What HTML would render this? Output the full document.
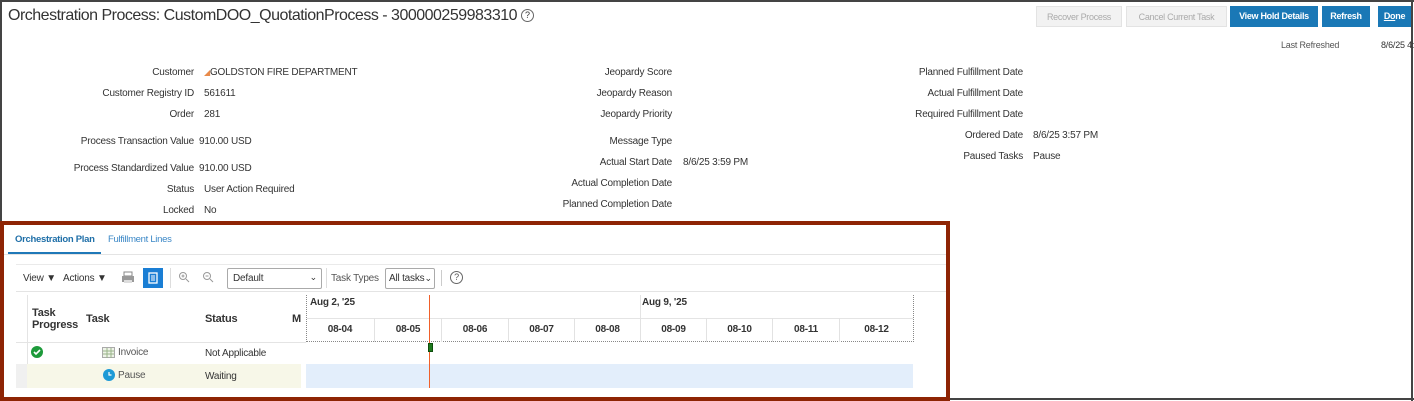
<!DOCTYPE html>
<html><head><style>
*{margin:0;padding:0;box-sizing:border-box}
body{width:1414px;height:401px;background:#fff;font-family:"Liberation Sans",sans-serif;position:relative;overflow:hidden;color:#333;letter-spacing:-0.2px}
.a{position:absolute;white-space:nowrap}
.l{font-size:10px;text-align:right;color:#333}
.v{font-size:10px;color:#333}
.btn{position:absolute;top:6px;height:21px;font-size:9px;font-weight:bold;line-height:21px;text-align:center;letter-spacing:-0.3px}
.g{background:#f2f2f2;color:#aaa;border:1px solid #e3e3e3;font-weight:normal}
.b{background:#1a78b6;color:#fff}
.day{position:absolute;top:318px;height:24px;font-size:10px;font-weight:bold;line-height:24px;text-align:center;border-left:1px solid #e2e2e2;color:#333}
.h{font-size:11px;font-weight:bold;color:#333}
</style></head><body>
<div class="a" style="left:0;top:0;width:1414px;height:2px;background:#444"></div>
<div class="a" style="left:1411px;top:0;width:2px;height:401px;background:#444"></div>
<div class="a" style="left:0;top:398px;width:1414px;height:2px;background:#444"></div>
<div class="a" style="left:0;top:0;width:2px;height:221px;background:#444"></div>

<div class="a" style="left:8px;top:7px;font-size:16px;letter-spacing:-0.5px;color:#333">Orchestration Process: CustomDOO_QuotationProcess - 300000259983310 <span style="display:inline-block;width:13px;height:13px;border:1px solid #666;border-radius:50%;font-size:9px;text-align:center;line-height:11px;vertical-align:2px;letter-spacing:0">?</span></div>

<div class="btn g" style="left:1036px;width:86px">Recover Process</div>
<div class="btn g" style="left:1126px;width:101px">Cancel Current Task</div>
<div class="btn b" style="left:1230px;width:88px">View Hold Details</div>
<div class="btn b" style="left:1322px;width:48px">Refresh</div>
<div class="btn b" style="left:1378px;width:33px"><u>Do</u>ne</div>
<div class="a v" style="left:1281px;top:40px;color:#555;font-size:9px">Last Refreshed</div>
<div class="a v" style="left:1381px;top:40px;font-size:9px">8/6/25 4:15 PM</div>

<!-- column 1 -->
<div class="a l" style="right:1220px;top:67px">Customer</div>
<div class="a v" style="left:204px;top:67px"><span style="color:#e88a4a;font-size:8px">&#9698;</span>GOLDSTON FIRE DEPARTMENT</div>
<div class="a l" style="right:1220px;top:88px">Customer Registry ID</div><div class="a v" style="left:204px;top:88px">561611</div>
<div class="a l" style="right:1220px;top:109px">Order</div><div class="a v" style="left:204px;top:109px">281</div>
<div class="a l" style="right:1220px;top:136px">Process Transaction Value</div><div class="a v" style="left:199px;top:136px">910.00 USD</div>
<div class="a l" style="right:1220px;top:163px">Process Standardized Value</div><div class="a v" style="left:199px;top:163px">910.00 USD</div>
<div class="a l" style="right:1220px;top:184px">Status</div><div class="a v" style="left:204px;top:184px">User Action Required</div>
<div class="a l" style="right:1220px;top:205px">Locked</div><div class="a v" style="left:204px;top:205px">No</div>

<!-- column 2 -->
<div class="a l" style="right:742px;top:67px">Jeopardy Score</div>
<div class="a l" style="right:742px;top:88px">Jeopardy Reason</div>
<div class="a l" style="right:742px;top:109px">Jeopardy Priority</div>
<div class="a l" style="right:742px;top:136px">Message Type</div>
<div class="a l" style="right:742px;top:157px">Actual Start Date</div><div class="a v" style="left:683px;top:157px">8/6/25 3:59 PM</div>
<div class="a l" style="right:742px;top:178px">Actual Completion Date</div>
<div class="a l" style="right:742px;top:199px">Planned Completion Date</div>

<!-- column 3 -->
<div class="a l" style="right:391px;top:67px">Planned Fulfillment Date</div>
<div class="a l" style="right:391px;top:88px">Actual Fulfillment Date</div>
<div class="a l" style="right:391px;top:109px">Required Fulfillment Date</div>
<div class="a l" style="right:391px;top:130px">Ordered Date</div><div class="a v" style="left:1033px;top:130px">8/6/25 3:57 PM</div>
<div class="a l" style="right:391px;top:151px">Paused Tasks</div><div class="a v" style="left:1033px;top:151px">Pause</div>

<!-- red box -->
<div class="a" style="left:0;top:221px;width:950px;height:180px;border:4px solid #8e2404"></div>

<div class="a" style="left:15px;top:234px;font-size:9.5px;font-weight:bold;color:#1f6fa8;letter-spacing:-0.3px">Orchestration Plan</div>
<div class="a" style="left:108px;top:234px;font-size:9.5px;color:#3a87c6;letter-spacing:-0.3px">Fulfillment Lines</div>
<div class="a" style="left:8px;top:252px;width:93px;height:2px;background:#1f78b8"></div>
<div class="a" style="left:4px;top:254px;width:942px;height:1px;background:#e4e4e4"></div>
<div class="a" style="left:16px;top:264px;width:930px;height:1px;background:#eaeaea"></div>
<div class="a" style="left:16px;top:291px;width:930px;height:1px;background:#e4e4e4"></div>

<div class="a v" style="left:23px;top:273px">View &#9660;</div>
<div class="a v" style="left:63px;top:273px">Actions &#9660;</div>
<svg class="a" style="left:121px;top:271px" width="14" height="13"><rect x="3" y="1" width="8" height="4" fill="none" stroke="#888"/><rect x="1" y="5" width="12" height="6" fill="#999"/><rect x="3" y="9" width="8" height="3" fill="#ddd"/></svg>
<div class="a" style="left:143px;top:268px;width:20px;height:20px;background:#1a7ed4"><svg width="20" height="20"><rect x="6" y="5" width="8" height="10" fill="none" stroke="#fff" stroke-width="1.3"/><path d="M8 8h4M8 10h4M8 12h4" stroke="#fff"/></svg></div>
<div class="a" style="left:170px;top:268px;width:1px;height:20px;background:#ddd"></div>
<svg class="a" style="left:178px;top:271px" width="12" height="12"><circle cx="5" cy="5" r="3.5" fill="none" stroke="#999"/><path d="M3.5 5h3M5 3.5v3M8 8l3 3" stroke="#999"/></svg>
<svg class="a" style="left:202px;top:271px" width="12" height="12"><circle cx="5" cy="5" r="3.5" fill="none" stroke="#999"/><path d="M3.5 5h3M8 8l3 3" stroke="#999"/></svg>
<div class="a v" style="left:227px;top:268px;width:95px;height:21px;border:1px solid #aaa;border-radius:2px;padding:4px 5px">Default<span style="position:absolute;right:4px;top:3px;font-size:9px">&#8964;</span></div>
<div class="a" style="left:326px;top:268px;width:1px;height:20px;background:#ddd"></div>
<div class="a v" style="left:331px;top:273px;color:#555">Task Types</div>
<div class="a v" style="left:385px;top:268px;width:50px;height:21px;border:1px solid #aaa;border-radius:2px;padding:4px 3px">All tasks<span style="font-size:9px">&#8964;</span></div>
<div class="a" style="left:441px;top:270px;width:1px;height:16px;background:#ccc"></div>
<div class="a" style="left:450px;top:271px;width:13px;height:13px;border:1px solid #666;border-radius:50%;font-size:9px;text-align:center;line-height:11px;color:#555">?</div>

<!-- table -->
<div class="a" style="left:27px;top:295px;width:1px;height:93px;background:#e4e4e4"></div>
<div class="a h" style="left:32px;top:307px;line-height:12px">Task<br>Progress</div>
<div class="a h" style="left:86px;top:313px">Task</div>
<div class="a h" style="left:205px;top:313px">Status</div>
<div class="a h" style="left:292px;top:313px">M</div>
<div class="a" style="left:16px;top:342px;width:290px;height:1px;background:#e4e4e4"></div>
<div class="a" style="left:16px;top:364px;width:285px;height:24px;background:#f7f7e8"></div>
<div class="a" style="left:16px;top:364px;width:11px;height:24px;background:#f0f0f0"></div>
<svg class="a" style="left:31px;top:346px" width="12" height="12"><circle cx="6" cy="6" r="6" fill="#1d9a3a"/><path d="M3 6l2 2 4-4" stroke="#fff" stroke-width="1.6" fill="none"/></svg>
<svg class="a" style="left:102px;top:347px" width="13" height="11"><rect x=".5" y=".5" width="12" height="10" fill="#eef3e8" stroke="#aaa"/><path d="M1 4h11M1 7h11M5 1v10M9 1v10" stroke="#9ab58a"/></svg>
<div class="a v" style="left:118px;top:347px;color:#555">Invoice</div>
<div class="a v" style="left:205px;top:348px">Not Applicable</div>
<svg class="a" style="left:103px;top:369px" width="12" height="12"><circle cx="6" cy="6" r="6" fill="#1e9ad6"/><path d="M6 3v3h2.5" stroke="#fff" stroke-width="1.2" fill="none"/></svg>
<div class="a v" style="left:118px;top:370px;color:#555">Pause</div>
<div class="a v" style="left:205px;top:371px">Waiting</div>

<!-- gantt -->
<div class="a" style="left:306px;top:295px;width:608px;height:47px;border-left:1px dotted #888;border-right:1px dotted #888;border-bottom:1px dotted #888"></div>
<div class="a" style="left:307px;top:318px;width:606px;height:1px;background:#e4e4e4"></div>
<div class="a" style="left:640px;top:295px;width:1px;height:23px;background:#e4e4e4"></div>
<div class="a h" style="left:310px;top:297px;font-size:10px">Aug 2, '25</div>
<div class="a h" style="left:642px;top:297px;font-size:10px">Aug 9, '25</div>
<div class="day" style="left:306px;width:68px;border-left:none">08-04</div>
<div class="day" style="left:374px;width:67px">08-05</div>
<div class="day" style="left:441px;width:67px">08-06</div>
<div class="day" style="left:508px;width:66px">08-07</div>
<div class="day" style="left:574px;width:66px">08-08</div>
<div class="day" style="left:640px;width:66px">08-09</div>
<div class="day" style="left:706px;width:66px">08-10</div>
<div class="day" style="left:772px;width:67px">08-11</div>
<div class="day" style="left:839px;width:74px">08-12</div>
<div class="a" style="left:306px;top:364px;width:607px;height:24px;background:#e3eefb"></div>
<div class="a" style="left:429px;top:295px;width:1px;height:93px;background:#f0602a"></div>
<div class="a" style="left:428px;top:343px;width:5px;height:9px;background:#1e7a1e;border:1px solid #0d4d0d"></div>
</body></html>
